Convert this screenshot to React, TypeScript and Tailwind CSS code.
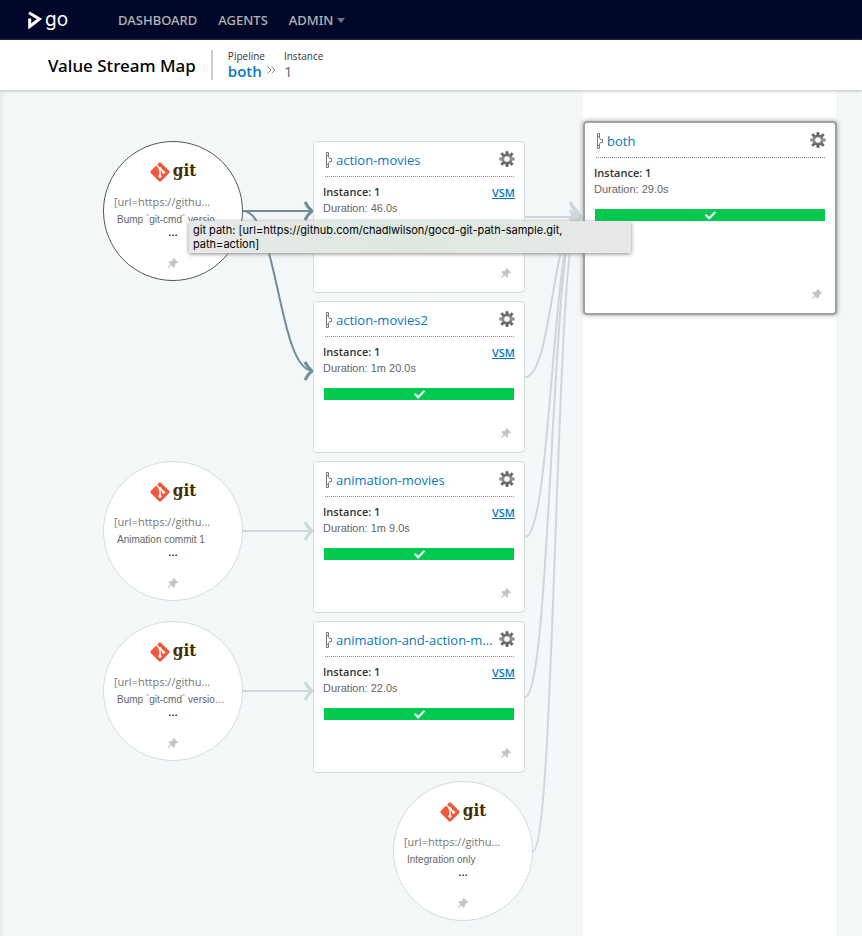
import React from "react";
import { FaCheck } from "react-icons/fa";

type Material = { x: number; y: number; comment: string; active?: boolean };
type Pipeline = {
  x: number;
  y: number;
  name: string;
  duration: string;
  current?: boolean;
};

// Node coordinates are measured from the top left corner of the graph canvas.
const materials: Material[] = [
  { x: 100, y: 51, comment: "Bump `git-cmd` versio…", active: true },
  { x: 100, y: 371, comment: "Animation commit 1" },
  { x: 100, y: 531, comment: "Bump `git-cmd` versio…" },
  { x: 390, y: 691, comment: "Integration only" },
];

const pipelines: Pipeline[] = [
  { x: 310, y: 51, name: "action-movies", duration: "46.0s" },
  { x: 310, y: 211, name: "action-movies2", duration: "1m 20.0s" },
  { x: 310, y: 371, name: "animation-movies", duration: "1m 9.0s" },
  { x: 310, y: 531, name: "animation-and-action-m...", duration: "22.0s" },
  { x: 580, y: 31, name: "both", duration: "29.0s", current: true },
];

type Link = { from: [number, number]; to: [number, number]; active?: boolean };
const links: Link[] = [
  { from: [240, 441], to: [310, 441] },
  { from: [240, 601], to: [310, 601] },
  { from: [522, 127], to: [579, 127] },
  { from: [522, 287], to: [577, 125] },
  { from: [522, 447], to: [576, 123] },
  { from: [522, 607], to: [575, 121] },
  { from: [530, 761], to: [575, 129] },
  { from: [240, 121], to: [310, 121], active: true },
  { from: [240, 121], to: [310, 281], active: true },
];

function LinkPath({ from, to, active }: Link) {
  const mid = (from[0] + to[0]) / 2;
  const [x, y] = to;
  return (
    <g className={active ? "stroke-[#6f8c9a]" : "stroke-[#cdd6db]"} fill="none" strokeWidth="2">
      <path d={`M${from[0]} ${from[1]}C${mid} ${from[1]} ${mid} ${y} ${x} ${y}`} />
      <path
        strokeWidth="3"
        d={`M${x - 8} ${y - 9}Q${x - 5} ${y - 3} ${x - 1} ${y}Q${x - 5} ${y + 3} ${x - 8} ${y + 9}`}
      />
    </g>
  );
}

function PinIcon() {
  return (
    <svg viewBox="0 0 12 12" className="size-3 fill-[#c4c4c4]">
      <path d="M6.600 .8 11.200 5.400 10.200 6.200 9.400 6 7.900 7.600 7.800 10 6.800 10.800 4.600 8.400 1.200 11.200 .8 10.800 3.600 7.300 1.400 5.200 2.200 4.200 4.500 4.100 6 2.600 5.800 1.800Z" />
    </svg>
  );
}

function GearIcon() {
  return (
    <svg viewBox="0 0 16 16" className="size-4">
      <defs>
        <linearGradient id="gear" x1="0" y1="0" x2="0" y2="16" gradientUnits="userSpaceOnUse">
          <stop offset="0" stopColor="#4a4a4a" />
          <stop offset="0.5" stopColor="#959595" />
          <stop offset="1" stopColor="#444" />
        </linearGradient>
      </defs>
      <g fill="none" stroke="url(#gear)">
        <circle cx="8" cy="8" r="4.200" strokeWidth="2.800" />
        <path
          strokeWidth="2.800"
          d="M8.010 .3 8 3M8.010 15.700 8 13M.3 8.010 3 8M15.700 8.010 13 8M2.300 2.300 4.500 4.500M13.700 2.300 11.500 4.500M2.300 13.700 4.500 11.500M13.700 13.700 11.500 11.500"
        />
      </g>
    </svg>
  );
}

function PipelineIcon() {
  return (
    <svg viewBox="0 0 7 16" className="h-4 w-[7px] shrink-0 fill-white stroke-[#777]">
      <path d="M1.500 .5H3.500V3.500H1.500ZM1.500 12.500H3.500V15.500H1.500ZM1.500 3.500H3.500V5L4.500 6.500H6.500V9.500H4.500L3.500 11V12.500H1.500Z" />
    </svg>
  );
}

function GitLogo() {
  return (
    <div className="flex h-5 items-center justify-center gap-[3px]">
      <svg viewBox="0 0 20 20" className="size-5">
        <path
          className="fill-[#f0583a]"
          d="M9 .7Q10 0 11 .7L19.300 9Q20 10 19.300 11L11 19.300Q10 20 9 19.300L.7 11Q0 10 .7 9Z"
        />
        <g className="fill-white stroke-white">
          <path fill="none" strokeWidth="1.400" d="M6.500 3 10 6.500V14.500M10 6.500 13.500 10" />
          <circle cx="10" cy="6.700" r="1.200" />
          <circle cx="10" cy="14.300" r="1.200" />
          <circle cx="13.500" cy="10.200" r="1.200" />
        </g>
      </svg>
      <span className="pb-1 font-['DejaVu_Serif_Condensed','DejaVu_Serif',serif] text-[17px] leading-5 font-bold text-[#413000]">
        git
      </span>
    </div>
  );
}

function MaterialNode({ x, y, comment, active }: Material) {
  return (
    <article
      style={{ left: x, top: y }}
      className={`absolute flex size-[140px] flex-col rounded-full border bg-white px-[10px] pt-5 ${
        active ? "border-[#555]" : "border-[#d3dde0]"
      }`}
    >
      <GitLogo />
      <p className="mt-3 text-[11px] leading-4 whitespace-nowrap text-[#777]">[url=https://githu...</p>
      <p className="ml-[3px] font-['Liberation_Sans',sans-serif] text-[10px] leading-5 whitespace-nowrap text-[#666]">
        {comment}
      </p>
      <button className="mx-auto -mt-[2px] h-2 text-[12px] leading-2 text-black" aria-label="More">
        ...
      </button>
      <button className="mx-auto mt-[21px]" aria-label="Pin">
        <PinIcon />
      </button>
    </article>
  );
}

function PipelineNode({ x, y, name, duration, current }: Pipeline) {
  return (
    <article
      style={{ left: x, top: y }}
      className={`absolute flex flex-col rounded bg-white pt-[10px] pr-[10px] pb-[13px] pl-[9px] ${
        current
          ? "h-[194px] w-[254px] border-2 border-[#a0a0a0] shadow-[0_0_5px_#999]"
          : "h-[152px] w-[212px] border border-[#d3dde0]"
      }`}
    >
      <div className="ml-[2px] flex h-[25px] items-start border-b border-dotted border-[#888]">
        <PipelineIcon />
        <h3 className="ml-[4px] text-[13px] leading-4 whitespace-nowrap text-[#666]">
          <a href="#pipeline" className="text-[#0a78bd]">
            {name}
          </a>
        </h3>
        <button className="-mt-px -mr-px ml-auto" aria-label="Edit pipeline">
          <GearIcon />
        </button>
      </div>
      <div className="mt-[7px] flex h-4 items-center justify-between text-[11px] leading-4 font-semibold text-[#333]">
        <span>Instance: 1</span>
        {!current && (
          <a href="#vsm" className="-mr-px pt-[2px] text-[#0a78bd] underline">
            VSM
          </a>
        )}
      </div>
      <p className="font-['Liberation_Sans',sans-serif] text-[11px] leading-4 text-[#666]">Duration: {duration}</p>
      <div className="mt-3 ml-px flex h-3 shrink-0 items-center justify-center bg-[#00c950]">
        <FaCheck className="size-[11px] text-white" />
      </div>
      <button className="mt-auto mr-[2px] self-end" aria-label="Pin">
        <PinIcon />
      </button>
    </article>
  );
}

function TopBar() {
  return (
    <header className="flex h-10 items-center bg-[#000728] pl-7">
      <a href="#home" aria-label="Go home" className="flex w-[90px] items-center gap-[3px] text-white">
        <svg viewBox="0 0 14 18" className="h-[18px] w-[14px]" fill="none" stroke="currentColor" strokeWidth="3">
          <path d="M1 1.700 11.500 8 1.700 15.500V7.500" />
        </svg>
        <span className="font-[Inter,sans-serif] text-[19px] leading-5">go</span>
      </a>
      <nav className="flex items-center gap-[21px] font-['Noto_Sans',sans-serif] text-[13px] leading-5 font-medium text-[#b5b5b5]">
        <a href="#dashboard">DASHBOARD</a>
        <a href="#agents">AGENTS</a>
        <button className="flex items-center gap-1">
          ADMIN
          <svg viewBox="0 0 8 5" className="h-[5px] w-2 fill-[#647984]">
            <path d="M0 0H8L4 5Z" />
          </svg>
        </button>
      </nav>
    </header>
  );
}

function TitleBar() {
  return (
    <div className="relative z-10 flex h-[50px] items-center bg-white pl-12 shadow-[0_1px_3px_#bbb]">
      <h1 className="pt-[2px] font-['Noto_Sans',sans-serif] text-[17px] leading-6 font-medium text-black">
        Value Stream Map
      </h1>
      <div className="ml-[15px] flex h-[30px] items-start border-l-2 border-[#ccc] pl-[15px] text-[10px] text-[#333]">
        <div>
          <div className="leading-3">Pipeline</div>
          <a href="#both" className="block text-[15px] leading-[18px] font-semibold text-[#0a78bd]">
            both
          </a>
        </div>
        <svg viewBox="0 0 9 8" className="mt-4 mr-2 ml-[2px] h-2 w-[9px]" fill="none" stroke="#888">
          <path d="M.5 .5 4 4 .5 7.500M4.500 .5 8 4 4.500 7.500" />
        </svg>
        <div>
          <div className="leading-3">Instance</div>
          <div className="text-[15px] leading-[18px] text-[#666]">1</div>
        </div>
      </div>
    </div>
  );
}

export default function App() {
  return (
    <div className="flex min-h-screen flex-col bg-[#f3f7f8] font-['Open_Sans',sans-serif]">
      <TopBar />
      <TitleBar />
      <main className="flex-1 border-l-[3px] border-[#e9edee]">
        <div className="relative h-[846px]">
          <div className="absolute inset-y-0 left-[580px] w-[253px] bg-white" />
          <svg className="absolute inset-0 size-full" aria-hidden="true">
            {links.map((link, i) => (
              <LinkPath key={i} {...link} />
            ))}
          </svg>
          {materials.map((m) => (
            <MaterialNode key={`${m.x}-${m.y}`} {...m} />
          ))}
          {pipelines.map((p) => (
            <PipelineNode key={p.name} {...p} />
          ))}
          <div
            role="tooltip"
            className="absolute top-[131px] left-[186px] w-[442px] bg-linear-to-r from-[#e8e8e8] via-[#dde9e0] to-[#e8e8e8] px-1 pt-[2px] pb-[2px] font-[Inter,sans-serif] text-[11px] leading-[14px] text-black shadow-[0_1px_4px_#888]"
          >
            git path: [url=https://github.com/chadlwilson/gocd-git-path-sample.git, path=action]
          </div>
        </div>
      </main>
    </div>
  );
}
